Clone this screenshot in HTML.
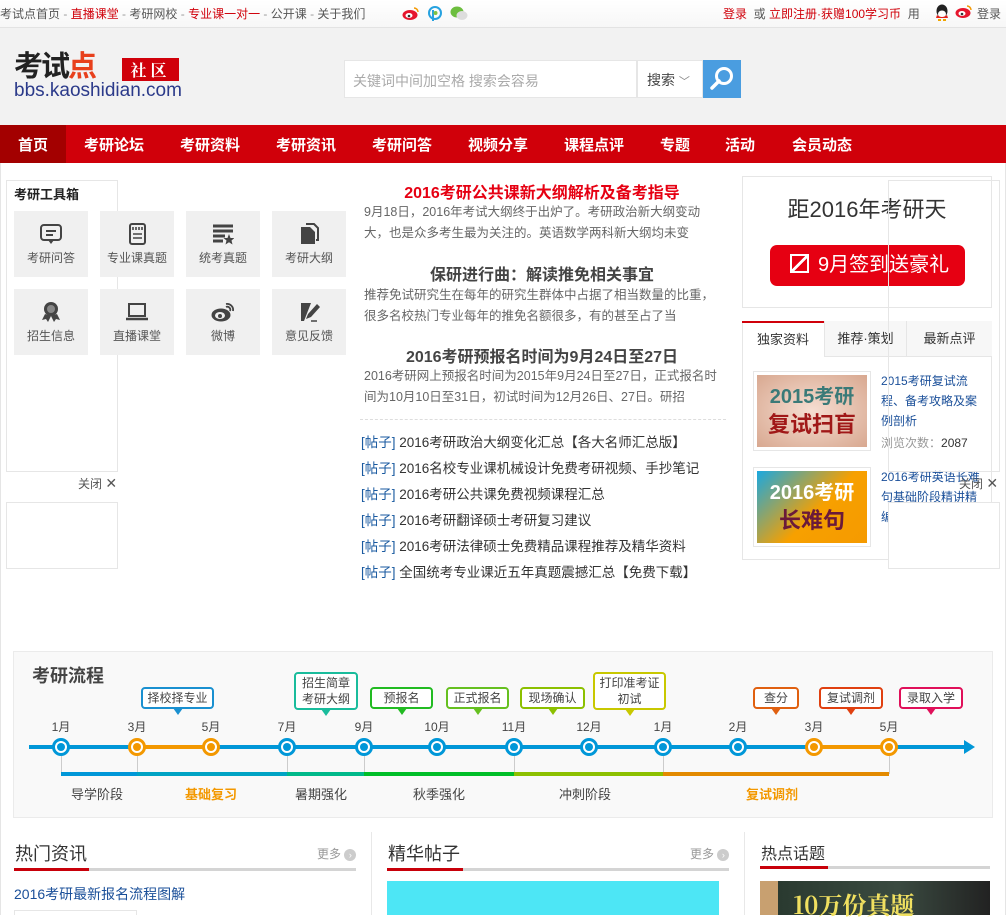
<!DOCTYPE html>
<html><head><meta charset="utf-8"><style>
*{margin:0;padding:0;box-sizing:border-box}
body{width:1006px;height:915px;overflow:hidden;position:relative;background:#fff;font-family:"Liberation Sans","Noto Sans CJK SC",sans-serif;font-size:12px;color:#333}
.a{position:absolute;white-space:nowrap}
.top{left:0;top:0;width:1006px;height:28px;background:linear-gradient(#fff,#f7f7f7);border-bottom:1px solid #e3e3e3}
.hd{left:0;top:28px;width:1006px;height:97px;background:#f2f2f2}
.nav{left:0;top:125px;width:1006px;height:38px;background:#d0000a}
.nav span{position:absolute;top:9px;color:#fff;font-weight:bold;font-size:15px}
.tile{position:absolute;width:74px;height:66px;background:#f0f0f0;text-align:center;color:#555;font-size:12px}
.tile svg{display:block;margin:12px auto 4px}
.frame{position:absolute;border:1px solid #e6e6e6}
.mt{font-size:12.5px;color:#666;line-height:21px;left:364px;width:360px;overflow:hidden;white-space:normal;height:42px}
.li{left:361px;font-size:13.5px;color:#333}
.li b{font-weight:normal;color:#1a5aa0}
.dot{position:absolute;top:738px;width:18px;height:18px;border-radius:50%;border:3px solid #0097d8;background:#fff}
.dot:after{content:"";position:absolute;left:2px;top:2px;width:8px;height:8px;border-radius:50%;background:#0097d8}
.o{border-color:#f39800}.o:after{background:#f39800}
.mo{position:absolute;top:718px;font-size:12px;color:#444;transform:translateX(-50%)}
.bub{position:absolute;border:2px solid;border-radius:4px;background:#fff;font-size:12px;color:#444;text-align:center;line-height:16px;padding:1px 2px}
.bub:after{content:"";position:absolute;left:50%;bottom:-8px;margin-left:-5px;border:5px solid transparent;border-top:7px solid;border-top-color:inherit;border-bottom:0}
.ph{position:absolute;top:784px;font-size:13px;color:#444}
.tk{position:absolute;top:756px;width:1px;height:18px;background:#ccc}
.bar{position:absolute;top:772px;height:4px}
</style></head><body>
<div class="a top"></div>
<div class="a" style="left:0;top:5px;font-size:12px;color:#555">考试点首页 <span style="color:#999">-</span> <span style="color:#d0000a">直播课堂</span> <span style="color:#999">-</span> 考研网校 <span style="color:#999">-</span> <span style="color:#d0000a">专业课一对一</span> <span style="color:#999">-</span> 公开课 <span style="color:#999">-</span> 关于我们</div>
<svg class="a" style="left:402px;top:6px" width="18" height="15"><ellipse cx="8" cy="9" rx="7.5" ry="5" fill="#e6162d"/><ellipse cx="7" cy="9.5" rx="3.5" ry="2.5" fill="#fff"/><circle cx="7" cy="10" r="1.3" fill="#333"/><path d="M12 2a4 4 0 0 1 4 4" stroke="#f39800" stroke-width="1.5" fill="none"/></svg>
<svg class="a" style="left:427px;top:6px" width="16" height="16"><circle cx="8" cy="7" r="6" fill="none" stroke="#27a2e0" stroke-width="2"/><path d="M6 4v11" stroke="#27a2e0" stroke-width="2"/><circle cx="8.5" cy="7" r="2" fill="#7fc241"/></svg>
<svg class="a" style="left:450px;top:5px" width="18" height="16"><ellipse cx="7" cy="7" rx="6.5" ry="5.5" fill="#6dbe3f"/><ellipse cx="12" cy="10.5" rx="5.5" ry="4.5" fill="#ddd"/></svg>
<div class="a" style="left:723px;top:5px;font-size:12px;color:#555"><span style="color:#d0000a">登录</span>&nbsp;&nbsp;或 <span style="color:#d0000a">立即注册·获赠100学习币</span>&nbsp;&nbsp;用</div>
<svg class="a" style="left:934px;top:3px" width="16" height="18"><ellipse cx="8" cy="8" rx="5.5" ry="6.5" fill="#222"/><ellipse cx="8" cy="11" rx="4" ry="3.5" fill="#fff"/><path d="M3 12q5 4 10 0l1 3H2z" fill="#e3221c"/><path d="M4 17h3M9 17h3" stroke="#f0a500" stroke-width="2"/></svg>
<svg class="a" style="left:955px;top:4px" width="18" height="15"><ellipse cx="8" cy="9" rx="7.5" ry="5" fill="#e6162d"/><ellipse cx="7" cy="9.5" rx="3.5" ry="2.5" fill="#fff"/><circle cx="7" cy="10" r="1.3" fill="#333"/><path d="M12 2a4 4 0 0 1 4 4" stroke="#f39800" stroke-width="1.5" fill="none"/></svg>
<div class="a" style="left:977px;top:5px;color:#555">登录</div>

<div class="a hd"></div>
<div class="a" style="left:14px;top:53px;font-size:29px;line-height:29px;font-weight:bold;color:#222;letter-spacing:-2px">考试<span style="color:#e8401c">点</span></div>
<div class="a" style="left:122px;top:58px;width:57px;height:23px;background:#d0000a;color:#fff;font-family:'Noto Serif CJK SC',serif;font-weight:bold;font-size:16px;text-align:center;line-height:23px;letter-spacing:4px">社区</div>
<div class="a" style="left:14px;top:81px;font-size:19px;line-height:20px;color:#2b3a8a">bbs.kaoshidian.com</div>
<div class="a" style="left:344px;top:60px;width:293px;height:38px;background:#fff;border:1px solid #e6e6e6;color:#aaa;font-size:14px;padding:10px 8px">关键词中间加空格 搜索会容易</div>
<div class="a" style="left:637px;top:60px;width:66px;height:38px;background:#fff;border:1px solid #e6e6e6;color:#444;font-size:14px;padding:9px 9px">搜索 <span style="color:#888;font-size:11px">﹀</span></div>
<div class="a" style="left:703px;top:60px;width:38px;height:38px;background:#4a9de0"></div>
<svg class="a" style="left:708px;top:64px" width="28" height="30"><circle cx="16" cy="12" r="7.5" fill="none" stroke="#fff" stroke-width="3"/><path d="M11 17l-7 7" stroke="#fff" stroke-width="3.5" stroke-linecap="round"/></svg>

<div class="a nav"><div style="position:absolute;left:0;top:0;width:66px;height:38px;background:#a30000"></div>
<span style="left:18px">首页</span><span style="left:84px">考研论坛</span><span style="left:180px">考研资料</span><span style="left:276px">考研资讯</span><span style="left:372px">考研问答</span><span style="left:468px">视频分享</span><span style="left:564px">课程点评</span><span style="left:660px">专题</span><span style="left:725px">活动</span><span style="left:792px">会员动态</span></div>
<div class="a" style="left:0;top:163px;width:1px;height:752px;background:#e5e5e5"></div>
<div class="a" style="left:1005px;top:163px;width:1px;height:752px;background:#e5e5e5"></div>

<!-- toolbox -->
<div class="frame" style="left:6px;top:180px;width:112px;height:292px"></div>
<div class="a" style="left:14px;top:184px;font-size:13px;font-weight:bold;color:#222">考研工具箱</div>
<div class="tile" style="left:14px;top:211px"><svg width="22" height="22"><rect x="1" y="2" width="20" height="15" rx="3" fill="none" stroke="#444" stroke-width="2"/><path d="M6 8h10M6 12h7" stroke="#444" stroke-width="2"/><path d="M8 17l3 4 3-4" fill="#444"/></svg>考研问答</div>
<div class="tile" style="left:100px;top:211px"><svg width="22" height="22"><rect x="4" y="1" width="15" height="20" rx="2" fill="none" stroke="#444" stroke-width="2"/><path d="M7 4v3M10 4v3M13 4v3M16 4v3M7 11h9M7 15h9" stroke="#444" stroke-width="1.6"/></svg>专业课真题</div>
<div class="tile" style="left:186px;top:211px"><svg width="22" height="22"><path d="M1 3h20M1 8h20M1 13h12M1 18h10" stroke="#444" stroke-width="3"/><path d="M17 11l1.5 4h4l-3 2.5 1 4-3.5-2.3-3.5 2.3 1-4-3-2.5h4z" fill="#444"/></svg>统考真题</div>
<div class="tile" style="left:272px;top:211px"><svg width="22" height="22"><path d="M3 4h9l5 5v12H3z" fill="#444"/><path d="M8 1h8l4 4v12h-2" fill="none" stroke="#444" stroke-width="2"/></svg>考研大纲</div>
<div class="tile" style="left:14px;top:289px"><svg width="22" height="22"><circle cx="11" cy="8" r="7" fill="#444"/><circle cx="11" cy="8" r="4" fill="#888"/><path d="M5 13l-3 6 4-1 2 3 3-6M17 13l3 6-4-1-2 3-3-6" fill="#444"/></svg>招生信息</div>
<div class="tile" style="left:100px;top:289px"><svg width="22" height="22"><rect x="3" y="3" width="16" height="12" fill="none" stroke="#444" stroke-width="2"/><path d="M0 18h22" stroke="#444" stroke-width="2.5"/></svg>直播课堂</div>
<div class="tile" style="left:186px;top:289px"><svg width="24" height="22"><ellipse cx="10" cy="14" rx="9.5" ry="6.5" fill="#444"/><ellipse cx="9" cy="14.5" rx="5" ry="3.5" fill="#f0f0f0"/><circle cx="9" cy="15" r="2" fill="#444"/><path d="M15 3a6 6 0 0 1 7 7M15 6a3 3 0 0 1 4 4" stroke="#444" stroke-width="1.8" fill="none"/></svg>微博</div>
<div class="tile" style="left:272px;top:289px"><svg width="22" height="22"><path d="M3 2h10l-7 18H3z" fill="#444"/><path d="M8 18l2-5 9-10 3 3-9 10z" fill="#444"/><path d="M13 20h6" stroke="#444" stroke-width="1.5"/></svg>意见反馈</div>
<div class="a" style="left:78px;top:475px;color:#555">关闭 <span style="font-size:14px">✕</span></div>
<div class="frame" style="left:6px;top:502px;width:112px;height:67px"></div>

<!-- middle -->
<div class="a" style="left:360px;width:364px;text-align:center;top:179px;font-size:16px;font-weight:bold;color:#e60012">2016考研公共课新大纲解析及备考指导</div>
<div class="a mt" style="top:202px">9月18日，2016年考试大纲终于出炉了。考研政治新大纲变动大，也是众多考生最为关注的。英语数学两科新大纲均未变</div>
<div class="a" style="left:360px;width:364px;text-align:center;top:261px;font-size:16px;font-weight:bold;color:#444">保研进行曲：解读推免相关事宜</div>
<div class="a mt" style="top:285px">推荐免试研究生在每年的研究生群体中占据了相当数量的比重，很多名校热门专业每年的推免名额很多，有的甚至占了当</div>
<div class="a" style="left:360px;width:364px;text-align:center;top:343px;font-size:16px;font-weight:bold;color:#444">2016考研预报名时间为9月24日至27日</div>
<div class="a mt" style="top:366px">2016考研网上预报名时间为2015年9月24日至27日，正式报名时间为10月10日至31日，初试时间为12月26日、27日。研招</div>
<div class="a" style="left:360px;top:419px;width:366px;border-top:1px dashed #ddd"></div>
<div class="a li" style="top:431px"><b>[帖子]</b> 2016考研政治大纲变化汇总【各大名师汇总版】</div>
<div class="a li" style="top:457px"><b>[帖子]</b> 2016名校专业课机械设计免费考研视频、手抄笔记</div>
<div class="a li" style="top:483px;background:#fff"><b>[帖子]</b> 2016考研公共课免费视频课程汇总</div>
<div class="a li" style="top:509px"><b>[帖子]</b> 2016考研翻译硕士考研复习建议</div>
<div class="a li" style="top:535px"><b>[帖子]</b> 2016考研法律硕士免费精品课程推荐及精华资料</div>
<div class="a li" style="top:561px"><b>[帖子]</b> 全国统考专业课近五年真题震撼汇总【免费下载】</div>

<!-- right -->
<div class="frame" style="left:742px;top:176px;width:250px;height:132px"></div>
<div class="a" style="left:742px;width:250px;text-align:center;top:192px;font-size:22px;color:#333">距2016年考研天</div>
<div class="a" style="left:770px;top:245px;width:195px;height:41px;background:#e60012;border-radius:7px;color:#fff;font-size:20px;line-height:41px;padding-left:20px"><span style="display:inline-block;width:19px;height:19px;border:2px solid #fff;vertical-align:-2px;margin-right:9px;background:linear-gradient(135deg,transparent 45%,#fff 45%,#fff 58%,transparent 58%)"></span>9月签到送豪礼</div>
<div class="frame" style="left:742px;top:321px;width:250px;height:239px"></div>
<div class="a" style="left:742px;top:321px;width:82px;height:36px;border-top:2px solid #d0000a;text-align:center;line-height:34px;font-size:13px;color:#333">独家资料</div>
<div class="a" style="left:824px;top:321px;width:82px;height:36px;background:#f7f7f7;border-left:1px solid #e6e6e6;border-bottom:1px solid #e6e6e6;text-align:center;line-height:36px;font-size:13px;color:#333">推荐·策划</div>
<div class="a" style="left:906px;top:321px;width:86px;height:36px;background:#f7f7f7;border-left:1px solid #e6e6e6;border-bottom:1px solid #e6e6e6;text-align:center;line-height:36px;font-size:13px;color:#333">最新点评</div>
<div class="a" style="left:753px;top:371px;width:118px;height:80px;border:1px solid #e6e6e6;padding:3px"><div style="width:110px;height:72px;background:radial-gradient(#f6ded2,#d8a890);text-align:center;font-weight:bold;line-height:28px;padding-top:8px"><div style="font-size:20px;color:#3a7a78">2015考研</div><div style="font-size:22px;color:#a01818">复试扫盲</div></div></div>
<div class="a" style="left:881px;top:371px;width:100px;white-space:normal;color:#1a4f99;font-size:12px;line-height:20px">2015考研复试流程、备考攻略及案例剖析</div>
<div class="a" style="left:881px;top:434px;color:#999">浏览次数：<span style="color:#333">2087</span></div>
<div class="a" style="left:753px;top:467px;width:118px;height:80px;border:1px solid #e6e6e6;padding:3px"><div style="width:110px;height:72px;background:linear-gradient(135deg,#1aa8e0,#f7a000 55%,#f59a00);text-align:center;font-weight:bold;line-height:28px;padding-top:8px"><div style="font-size:20px;color:#fff">2016考研</div><div style="font-size:22px;color:#6a1a3a">长难句</div></div></div>
<div class="a" style="left:881px;top:467px;width:100px;white-space:normal;color:#1a4f99;font-size:12px;line-height:20px;height:60px;overflow:hidden">2016考研英语长难句基础阶段精讲精编</div>
<div class="frame" style="left:888px;top:180px;width:112px;height:292px"></div>
<div class="a" style="left:959px;top:475px;color:#555">关闭 <span style="font-size:14px">✕</span></div>
<div class="frame" style="left:888px;top:502px;width:112px;height:67px;background:#fff"></div>

<!-- flow -->
<div class="a" style="left:13px;top:651px;width:980px;height:167px;background:#f9f9f9;border:1px solid #ebebeb"></div>
<div class="a" style="left:32px;top:662px;font-size:18px;font-weight:bold;color:#444">考研流程</div>
<div class="a" style="left:29px;top:745px;width:941px;height:4px;background:#0097d8"></div>
<svg class="a" style="left:964px;top:740px" width="12" height="14"><path d="M0 0l11 7-11 7z" fill="#0097d8"/></svg>
<div class="a" style="left:137px;top:745px;width:74px;height:4px;background:#f39800"></div>
<div class="a" style="left:814px;top:745px;width:75px;height:4px;background:#f39800"></div>
<div class="tk" style="left:61px"></div><div class="tk" style="left:137px"></div><div class="tk" style="left:287px"></div><div class="tk" style="left:364px"></div><div class="tk" style="left:514px"></div><div class="tk" style="left:663px"></div><div class="tk" style="left:889px"></div>
<div class="bar" style="left:61px;width:76px;background:#0097d8"></div>
<div class="bar" style="left:137px;width:150px;background:#00a3c4"></div>
<div class="bar" style="left:287px;width:77px;background:#00b98a"></div>
<div class="bar" style="left:364px;width:150px;background:#00be28"></div>
<div class="bar" style="left:514px;width:149px;background:#8cc000"></div>
<div class="bar" style="left:663px;width:226px;background:#e38a00"></div>
<div class="dot" style="left:52px"></div><div class="dot o" style="left:128px"></div><div class="dot o" style="left:202px"></div><div class="dot" style="left:278px"></div><div class="dot" style="left:355px"></div><div class="dot" style="left:428px"></div><div class="dot" style="left:505px"></div><div class="dot" style="left:580px"></div><div class="dot" style="left:654px"></div><div class="dot" style="left:729px"></div><div class="dot o" style="left:805px"></div><div class="dot o" style="left:880px"></div>
<div class="mo" style="left:61px">1月</div><div class="mo" style="left:137px">3月</div><div class="mo" style="left:211px">5月</div><div class="mo" style="left:287px">7月</div><div class="mo" style="left:364px">9月</div><div class="mo" style="left:437px">10月</div><div class="mo" style="left:514px">11月</div><div class="mo" style="left:589px">12月</div><div class="mo" style="left:663px">1月</div><div class="mo" style="left:738px">2月</div><div class="mo" style="left:814px">3月</div><div class="mo" style="left:889px">5月</div>
<div class="bub" style="left:141px;top:687px;width:73px;border-color:#1a90d0">择校择专业</div>
<div class="bub" style="left:294px;top:672px;width:64px;border-color:#1abc9c">招生简章<br>考研大纲</div>
<div class="bub" style="left:370px;top:687px;width:63px;border-color:#22bb22">预报名</div>
<div class="bub" style="left:446px;top:687px;width:63px;border-color:#66c020">正式报名</div>
<div class="bub" style="left:520px;top:687px;width:65px;border-color:#8cc000">现场确认</div>
<div class="bub" style="left:593px;top:672px;width:73px;border-color:#c8c800">打印准考证<br>初试</div>
<div class="bub" style="left:753px;top:687px;width:46px;border-color:#e06010">查分</div>
<div class="bub" style="left:819px;top:687px;width:64px;border-color:#e04010">复试调剂</div>
<div class="bub" style="left:899px;top:687px;width:64px;border-color:#e0105a">录取入学</div>
<div class="ph" style="left:71px">导学阶段</div>
<div class="ph" style="left:185px;color:#f39800;font-weight:bold">基础复习</div>
<div class="ph" style="left:295px">暑期强化</div>
<div class="ph" style="left:413px">秋季强化</div>
<div class="ph" style="left:559px">冲刺阶段</div>
<div class="ph" style="left:746px;color:#f39800;font-weight:bold">复试调剂</div>

<!-- bottom -->
<div class="a" style="left:371px;top:832px;width:1px;height:83px;background:#e8e8e8"></div>
<div class="a" style="left:744px;top:832px;width:1px;height:83px;background:#e8e8e8"></div>
<div class="a" style="left:15px;top:840px;font-size:18px;color:#333">热门资讯</div>
<div class="a" style="left:317px;top:845px;font-size:12px;color:#999">更多 <span style="display:inline-block;width:12px;height:12px;border-radius:50%;background:#ccc;color:#fff;font-size:9px;line-height:12px;text-align:center">›</span></div>
<div class="a" style="left:14px;top:868px;width:342px;height:3px;background:#d4d4d4"></div>
<div class="a" style="left:14px;top:868px;width:75px;height:3px;background:#c8000a"></div>
<div class="a" style="left:14px;top:884px;font-size:14px;color:#1a4f99">2016考研最新报名流程图解</div>
<div class="a" style="left:14px;top:910px;width:123px;height:5px;border:1px solid #e6e6e6;border-bottom:0"></div>
<div class="a" style="left:388px;top:840px;font-size:18px;color:#333">精华帖子</div>
<div class="a" style="left:690px;top:845px;font-size:12px;color:#999">更多 <span style="display:inline-block;width:12px;height:12px;border-radius:50%;background:#ccc;color:#fff;font-size:9px;line-height:12px;text-align:center">›</span></div>
<div class="a" style="left:387px;top:868px;width:342px;height:3px;background:#d4d4d4"></div>
<div class="a" style="left:387px;top:868px;width:76px;height:3px;background:#c8000a"></div>
<div class="a" style="left:387px;top:881px;width:332px;height:34px;background:#4de6f5"></div>
<div class="a" style="left:761px;top:840px;font-size:16px;color:#333">热点话题</div>
<div class="a" style="left:760px;top:866px;width:230px;height:3px;background:#d4d4d4"></div>
<div class="a" style="left:760px;top:866px;width:68px;height:3px;background:#c8000a"></div>
<div class="a" style="left:760px;top:881px;width:230px;height:34px;background:linear-gradient(90deg,#c8a070 0,#c8a070 18px,#2a3a30 18px,#3a4a40 60%,#222 100%)"></div>
<div class="a" style="left:793px;top:886px;font-size:24px;font-weight:bold;color:#f0e060;font-family:'Noto Serif CJK SC',serif">10万份真题</div>
</body></html>
